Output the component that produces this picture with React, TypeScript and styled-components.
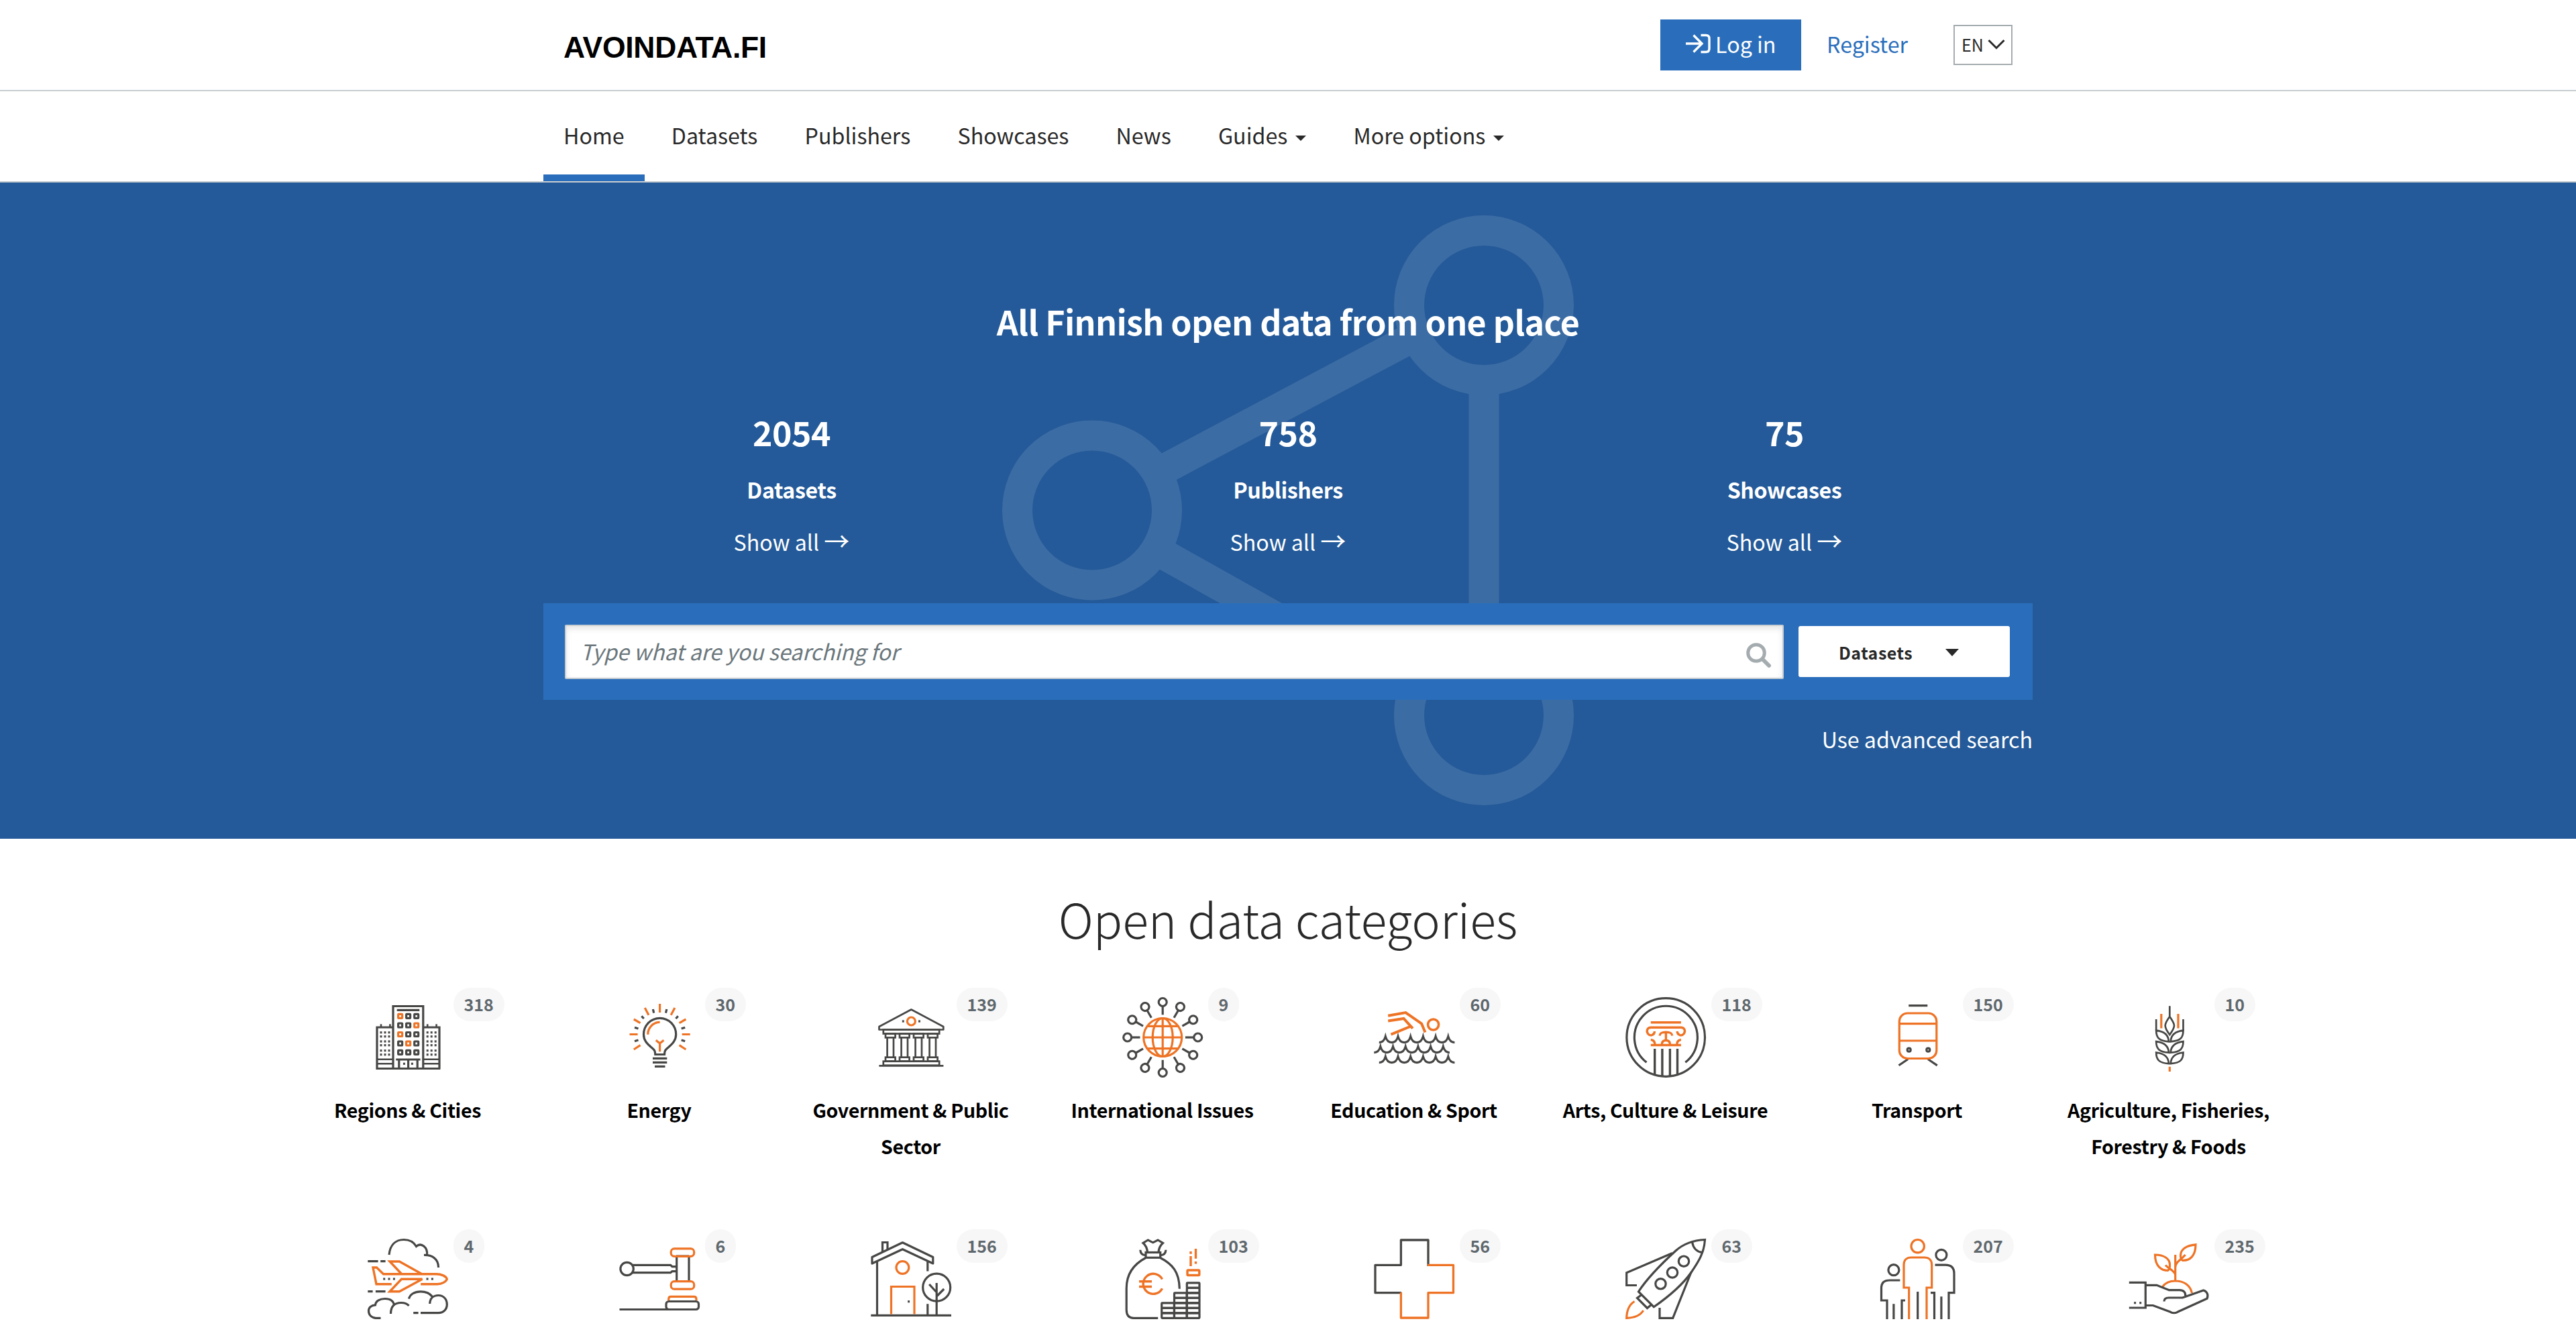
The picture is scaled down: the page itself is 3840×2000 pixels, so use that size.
import React from 'react';
import styled, { createGlobalStyle } from 'styled-components';

const DARK = '#474746';
const ORANGE = '#ee7325';
const BLUE = '#2a6ebb';
const NAVY = '#245a99';
const LINE = '#c8cdd0';

const GlobalStyle = createGlobalStyle`
  *, *::before, *::after { box-sizing: border-box; }
  body {
    margin: 0;
    background: #fff;
    color: #292929;
    font-family: "Noto Sans CJK JP", "Noto Sans CJK SC", "Noto Sans", sans-serif;
    font-size: 32.2px;
    line-height: 54px;
  }
`;

const Page = styled.div`
  width: 3840px;
  height: 2000px;
  overflow: hidden;
  background: #fff;
`;

const Container = styled.div`
  width: 2220px;
  margin: 0 auto;
`;

/* ---------- header ---------- */
const Header = styled.header`
  height: 136px;
  border-bottom: 2px solid ${LINE};
`;
const HeaderRow = styled(Container)`
  display: flex;
  align-items: center;
  height: 134px;
  padding: 0 30px;
`;
const Logo = styled.a`
  margin-right: auto;
  padding-top: 8px;
  font-family: "Liberation Sans", Arial, sans-serif;
  font-weight: 700;
  font-size: 44.5px;
  letter-spacing: -0.3px;
  color: #000;
`;
const LoginButton = styled.a`
  display: flex;
  align-items: center;
  gap: 6px;
  width: 210px;
  height: 76px;
  padding: 0 0 4px 38px;
  background: ${BLUE};
  color: #fff;
`;
const RegisterLink = styled.a`
  margin-left: 38px;
  padding-bottom: 4px;
  color: ${BLUE};
`;
const LanguageButton = styled.button`
  display: flex;
  align-items: center;
  gap: 6px;
  width: 88px;
  height: 60px;
  margin: 0 0 0 68px;
  padding: 0 0 2px 10px;
  border: 2px solid #a5acb0;
  background: #fff;
  color: #292929;
  font: inherit;
  font-size: 25px;
`;

/* ---------- navigation ---------- */
const NavBar = styled.nav`
  height: 136px;
  border-bottom: 2px solid ${LINE};
`;
const NavList = styled(Container)`
  display: flex;
  gap: 10.2px;
`;
const NavItem = styled.a<{ $active?: boolean }>`
  display: flex;
  align-items: center;
  height: 134px;
  padding: 0 30px 4px;
  box-shadow: ${p => (p.$active ? `inset 0 -10px 0 ${BLUE}` : 'none')};
`;
const NavCaret = styled.span`
  margin: 10px 0 0 12px;
  border: 8px solid transparent;
  border-top-color: #292929;
  border-bottom: 0;
`;

/* ---------- hero ---------- */
const Hero = styled.section`
  position: relative;
  height: 978px;
  padding-top: 166px;
  background: ${NAVY};
  color: #fff;
`;
const ShareMark = styled.svg`
  position: absolute;
  left: 1480px;
  top: 0;
`;
const HeroBody = styled(Container)`
  position: relative;
`;
const HeroTitle = styled.h1`
  margin: 0 0 92px;
  text-align: center;
  font-size: 50.1px;
  font-weight: 600;
  letter-spacing: -0.65px;
  line-height: 80px;
`;
const Stats = styled.div`
  display: grid;
  grid-template-columns: repeat(3, 1fr);
`;
const Stat = styled.div`
  display: flex;
  flex-direction: column;
  align-items: center;
`;
const StatNumber = styled.div`
  font-size: 50.1px;
  font-weight: 600;
  letter-spacing: -0.5px;
  line-height: 66px;
`;
const StatLabel = styled.div`
  margin-top: 26px;
  font-weight: 600;
  letter-spacing: -0.4px;
`;
const StatLink = styled.a`
  margin-top: 24px;
`;
const Arrow = styled.span`
  font-size: 38px;
  line-height: 1;
`;
const SearchBar = styled.form`
  display: flex;
  align-items: center;
  gap: 22px;
  height: 144px;
  margin: 65px 0 31px;
  padding: 0 34px 0 32px;
  background: ${BLUE};
`;
const SearchField = styled.div`
  display: flex;
  align-items: center;
  justify-content: space-between;
  flex: 1;
  height: 81px;
  padding: 0 16px 0 21px;
  border: 2px solid ${LINE};
  border-radius: 2px;
  background: #fff;
  box-shadow: inset 0 4px 8px rgba(41, 41, 41, 0.12);
`;
const Placeholder = styled.span`
  font-style: italic;
  color: #6b777c;
  padding-bottom: 2px;
`;
const SearchIcon = styled.svg`
  margin-top: 11px;
  fill: none;
  stroke: #a5acb0;
`;
const TypeButton = styled.button`
  display: flex;
  align-items: center;
  width: 315px;
  height: 76px;
  padding: 2px 0 0 60px;
  border: 0;
  border-radius: 3px;
  background: #fff;
  color: #292929;
  font: inherit;
  font-size: 25px;
  font-weight: 600;
  letter-spacing: 0.5px;
`;
const TypeCaret = styled.span`
  margin-left: 49px;
  border: 10px solid transparent;
  border-top: 11px solid #292929;
  border-bottom: 0;
`;
const AdvancedLink = styled.a`
  display: block;
  text-align: right;
`;

/* ---------- categories ---------- */
const Categories = styled.section`
  width: 3000px;
  margin: 0 auto;
  padding-top: 68px;
`;
const SectionTitle = styled.h2`
  margin: 0 0 68px;
  text-align: center;
  font-size: 71.8px;
  font-weight: 300;
  line-height: 100px;
`;
const CategoryGrid = styled.div`
  display: grid;
  grid-template-columns: repeat(8, 375px);
  grid-auto-rows: 360px;
`;
const CategoryCell = styled.a`
  display: flex;
  flex-direction: column;
  align-items: center;
`;
const IconBox = styled.div`
  position: relative;
  width: 120px;
  height: 120px;
`;
const Badge = styled.span`
  position: absolute;
  left: 128px;
  top: -14px;
  height: 50px;
  padding: 0 16px;
  border-radius: 25px;
  background: #f7f7f8;
  color: #5f686d;
  font-size: 25px;
  font-weight: 600;
  line-height: 49px;
`;
const CategoryName = styled.div`
  width: 325px;
  margin-top: 21px;
  text-align: center;
  color: #000;
  font-size: 28.6px;
  font-weight: 600;
  letter-spacing: -0.36px;
`;

/* ---------- icons ---------- */
const Glyph = styled.svg.attrs({ width: 120, height: 120, viewBox: '0 0 120 120' })`
  display: block;
  overflow: visible;
  fill: none;
  stroke: ${DARK};
  stroke-width: 3.2;
  .o { stroke: ${ORANGE}; }
  .f { fill: ${DARK}; stroke: none; }
`;

const Dot = ({ x, y }: { x: number; y: number }) => (
  <rect className="f" x={x - 1.5} y={y - 1.6} width={3} height={3.2} />
);

const City = () => (
  <Glyph>
    <path d="M38 106.5V13.5H82.8V106.5M14 106.5V45H38M82.8 45H107V106.5M12.4 106.5H108.4M43.7 19.3H77.3" />
    <path d="M20 40.3V45M33.4 40.3V45M89.2 40.3V45M102.6 40.3V45M14 92.7H38M14 99.3H38M83 92.7H107M83 99.3H107" strokeWidth={2.6} />
    <path d="M42.3 93H78.5M46.8 93V106M60.6 93V106M74.2 93V106" />
    {[28.3, 42, 55.5, 69, 82.3].map((y, r) =>
      [48.6, 60.6, 72.7].map((x, c) => (
        <rect key={`${r}${c}`} className={['00', '12', '20', '31'].includes(`${r}${c}`) ? 'o' : ''}
          x={x - 3} y={y - 3} width={6} height={6} rx={0.6} />
      )))}
    {[52.7, 58.7, 66, 71.7, 79.7, 85.7].map(y =>
      [20, 26, 32, 89.2, 95.2, 101.2].map(x => <Dot key={`${x}-${y}`} x={x} y={y} />))}
    <Dot x={54.4} y={99.3} /><Dot x={66.4} y={99.3} />
  </Glyph>
);

const Bulb = () => (
  <Glyph>
    <path d="M53.8 85.5C53.8 80 52.5 78.5 47.5 74.5C41 69 36.5 64 36.5 55.5A24 24 0 0 1 84.7 55.5C84.7 64 80 69 73.7 74.5C68.7 78.5 67.5 80 67.5 85.5Z" />
    <path d="M50 91.3H71.3M50 97.3H71.3M53 103.3H68.5" />
    <path className="o" d="M42.8 55.7A18 18 0 0 1 60.6 37.3M60.6 81.3V69L54.8 64.3M60.6 69L66.4 64.3" />
    <path className="o" d="M60.6 10V23M38.3 16L44 26.7M82.9 16L77.2 26.7M21.8 33L31.6 38.7M99.4 33L89.6 38.7M15.5 55.5H27.6M93.7 55.5H105.7M21.8 78L31.6 71.7M99.4 78L89.6 71.7" />
    <path d="M50.4 18L51.7 23.7M70.8 18L69.5 23.7M33.4 28.3L36.8 32M87.8 28.3L84.4 32M23 45.2L28.5 47M98.2 45.2L92.7 47M23 65.8L28.5 64M98.2 65.8L92.7 64" />
  </Glyph>
);

const Government = () => (
  <Glyph>
    <g strokeWidth={2.7}>
      <path d="M12.5 48.5V44L60.4 18.5L108.3 44V48.5Z" strokeLinejoin="round" />
      <rect x={18.8} y={48.5} width={83.4} height={6} />
      <rect x={18.8} y={95.7} width={83.4} height={6} />
      <path d="M12.4 102.3H108.4" />
      {[22, 43, 64, 85].map(x => (
        <g key={x}>
          <rect x={x} y={54.7} width={14.6} height={5.6} />
          <path d={`M${x + 2.6} 60.3V89.7M${x + 12} 60.3V89.7`} />
          <rect x={x} y={89.7} width={14.6} height={5.8} />
        </g>
      ))}
    </g>
    <circle className="o" cx={60.4} cy={36} r={6} />
    <Dot x={48.3} y={36} /><Dot x={72.5} y={36} />
  </Glyph>
);

const International = () => (
  <Glyph>
    <g className="o">
      <circle cx={60.2} cy={60} r={28.5} />
      <ellipse cx={60.2} cy={60} rx={15} ry={28.5} />
      <path d="M60.2 31.5V88.5M31.7 60H88.7M37 43.3H83.4M37 76.7H83.4" />
    </g>
    {Array.from({ length: 12 }, (_, i) => (
      <g key={i} transform={`rotate(${i * 30} 60.2 60)`}>
        <circle cx={60.2} cy={7.5} r={6} />
        <path d="M60.2 13.5V26.3" />
      </g>
    ))}
  </Glyph>
);

const scallop = 'q2.5 9 9.35 9q6.85 0 9.35 -9';
const wave = (x: number, y: number) =>
  `M${x} ${y + 8.8}q7 0 9.5 -9${scallop.repeat(5)}q2.5 9 9.6 9`;

const Swim = () => (
  <Glyph>
    <path d={`${wave(7.8, 58.8)}${wave(0.3, 73.8)}${wave(7.8, 88.8)}`} />
    <g className="o" strokeWidth={4}>
      <path d="M21.2 27.7L47.4 23L71.1 39.5L76.5 52.5M21.2 35.5L44.5 32L58 46.7M25.5 55.7L55 43.5" />
      <circle cx={88.6} cy={41} r={8} strokeWidth={3.6} />
    </g>
  </Glyph>
);

const Arts = () => (
  <Glyph>
    <circle cx={60.2} cy={60} r={58.3} />
    <path d="M31.5 97.3A47 47 0 1 1 89.3 97.3" />
    <path d="M43.7 77V116M54.9 77V118M66.4 77V118M77.5 77V116" strokeWidth={3.4} />
    <g className="o" strokeWidth={3.4}>
      <path d="M37.8 37.7H82.9M37.8 45.3H82.9M37.8 71.5H82.9" />
      <path d="M38 45.3C32 45.5 31 51 33.5 54.5C37 59 43.5 56.5 43.5 51M82.7 45.3C88.7 45.5 89.7 51 87.2 54.5C83.7 59 77.2 56.5 77.2 51" />
      <path d="M51 57.5C51.5 53.5 54 52.2 60.4 52.2C66.8 52.2 69.3 53.5 69.8 57.5M60.4 52V64.5M54.3 70.5C54.3 66 56.5 64.5 60.4 64.5C64.3 64.5 66.5 66 66.5 70.5M37.8 63.5C42 64 44 66.5 44 71M82.9 63.5C78.7 64 76.7 66.5 76.7 71" />
    </g>
  </Glyph>
);

const Tram = () => (
  <Glyph>
    <path d="M47.2 12.7H75.3M46.2 92.5L32.5 101.8M76 92.5L89.8 101.8" />
    <g className="o">
      <rect x={33.3} y={24} width={55.5} height={67.5} rx={12} />
      <path d="M33.3 39.7H88.8M33.3 65H88.8" />
    </g>
    <circle cx={47.7} cy={78.7} r={2.5} />
    <circle cx={76.3} cy={78.7} r={2.5} />
  </Glyph>
);

const Wheat = () => (
  <Glyph>
    <path d="M61.3 13.3V29C57 35 54.7 39 54.7 42.5C54.7 47 57.5 51 61.3 56C65 51 68 47 68 42.5C68 39 65.5 35 61.3 29" strokeWidth={2.7} />
    <path d="M41.2 33V50M81.5 33V50" strokeWidth={2.7} />
    {[0, 16.4, 32.8].map(dy => (
      <path key={dy} strokeWidth={2.7} transform={`translate(0 ${dy})`}
        d="M41.2 49.7C41.2 60 45 65.5 60 66.3C59.5 57 53 51 41.2 49.7ZM81.5 49.7C81.5 60 77.8 65.5 62.7 66.3C63.2 57 69.7 51 81.5 49.7Z" />
    ))}
    <path className="o" d="M48.8 25V46.5M74 25V46.5M61.3 103.7V111" />
  </Glyph>
);

const Plane = () => (
  <Glyph>
    <path d="M32 24C33.5 9 42 1.5 54 1.5C63 1.5 69 5.5 72.5 11.5C80 5 90 13 88.5 24.5M84 24.5C97 24 105.5 31 105.6 43" />
    <path d="M0.3 33.7H15.6M19.2 33.7H26.6M0.3 78.7H7.6M11.9 78.7H26.6" />
    <g className="o" strokeWidth={3.4}>
      <path d="M50.5 52.5L33 34H47.4L80.5 52.5M79.2 67.7H104C111 67.7 117 64 118.3 60.2C117 56 110 52.7 102.5 52.7H23.5L13.5 43H8L13 67.7H35.8" />
      <path d="M50.5 60.3H81.5L47.4 78.8H33Z" />
    </g>
    {[24.7, 32, 39.4, 89, 96.4].map(x => <Dot key={x} x={x} y={60} />)}
    <path d="M61.5 89.7C63 83 70 78.8 79 78.8C87 78.8 92.5 81 96.5 86.5M92.7 97C93 89 98 84.5 105.5 84.5C113 84.5 118.3 90 118.3 98C118.3 105.5 113 110.6 105.6 110.6H79M75.6 110.6H68.2" />
    <path d="M19.5 118.3H12C5 117.5 1.5 113 1.5 107.5C1.5 103 5 99.5 11.5 98.8C12 92.5 18.5 89.5 26 89.5C33.5 89.5 38.5 93 39.5 99M34.5 112C34.5 101 40 95.5 50 95.5C55 95.5 59 97 61.5 100" />
  </Glyph>
);

const Gavel = () => (
  <Glyph>
    <circle cx={11.6} cy={45} r={9.7} />
    <path d="M20 39.3H76.5L79 41.7H85M20 50.7H76.5L79 48.7H85M85.7 28V62.5M104 28V62.5M85 26H104" />
    <rect x={70} y={93.5} width={48.5} height={12} rx={4} />
    <path d="M0.5 105.5H112" />
    <g className="o">
      <rect x={77.2} y={14.8} width={34.5} height={11.5} rx={5} />
      <rect x={77.2} y={63.7} width={34.5} height={11.5} rx={5} />
      <path d="M73.7 92V90Q73.7 86.3 77 86.3H111.5Q115 86.3 115 90V92" />
    </g>
  </Glyph>
);

const House = () => (
  <Glyph>
    <path d="M2 27.5L47.4 5.8L92.8 27.5V37L47.4 15.7L2 37Z" strokeLinejoin="round" />
    <path d="M17.5 20V5.5H25V16M9.5 34V114M84.8 34V48.5M84.8 97.3V114M0.3 114.3H120" />
    <circle cx={98.2} cy={72.7} r={20.5} />
    <path d="M98.2 66V114M98.2 80L87.2 68M98.2 86L109.2 75" />
    <circle className="o" cx={47.4} cy={43} r={9.4} />
    <path className="o" d="M30.5 112.5V71.5H65V112.5" />
    <Dot x={56.6} y={93.7} />
  </Glyph>
);

const Money = () => (
  <Glyph>
    <path d="M53.2 118.3H17C10 118.3 6.2 114 6.2 106V74C6.2 52 17 38 35 28.5M56.6 28.5C75 38 85 50 85.3 74.7" />
    <rect x={35} y={20.5} width={21.7} height={7.8} />
    <path d="M37.5 20C37 14 35 10 31 6.5L38.3 2L45.7 5.8L53 2L60.5 6.5C56.5 10 54.5 14 54 20M26.8 16.7C27 21.5 30 24.5 35 24.7M64.9 16.7C64.7 21.5 61.7 24.5 56.7 24.7" />
    <path className="o" d="M59.5 60.5A15 15 0 1 0 59.5 74.2M25 63.7H44M25 71.5H44" strokeWidth={3.4} />
    {[[58.7, 3], [77.5, 5], [96.3, 7]].map(([x, n]) =>
      Array.from({ length: n }, (_, i) => (
        <rect key={`${x}-${i}`} x={x} y={110.9 - i * 7.5} width={18.7} height={7.5} rx={0.8} />
      )))}
    <g className="o">
      <rect x={97} y={47} width={17.8} height={7.5} rx={1} strokeWidth={3.4} />
      <path d="M102 19V22.7M102 26V41M109.5 15V29.7M109.5 34V37.5" strokeWidth={3.4} />
    </g>
  </Glyph>
);

const Cross = () => (
  <Glyph>
    <g strokeWidth={3.3} strokeLinejoin="round">
      <path d="M81 41V2H40.4V39.3H2V80.7H41" />
      <path className="o" d="M80 39.3H118.5V80.7H81V118H40.4V80" />
    </g>
  </Glyph>
);

const Rocket = () => (
  <Glyph>
    <path d="M118.5 1.5C100 2.5 86 8 75 18C52 39 33 58 19.5 79L42.3 101.7C62 88 84 70 97.7 50.7C110 33 117.5 20 118.5 1.5ZM99.8 6C101 14 106.5 19.5 114.6 20.7" />
    <circle cx={87} cy={33.7} r={7.7} />
    <circle cx={70} cy={50.5} r={7.7} />
    <circle cx={52.5} cy={67.3} r={7.7} />
    <path d="M70 21.5L1.7 50.7V69.5H17M98 50L70.7 118.3H51V103M23.5 84L17.5 88.5L32.5 103.5L38.5 98.5" />
    <path className="o" d="M13.5 93.5C6 98 2 106 1.7 118.3C14 118 22 114.5 26.7 107" />
  </Glyph>
);

const People = () => (
  <Glyph>
    <circle cx={24.9} cy={46.7} r={8} />
    <circle cx={95.9} cy={24.3} r={8} />
    <path d="M34.4 62H19C10 62 6.5 66 6.5 74V92H15V120M24.9 97.3V120M42 92H37V120" />
    <path d="M86.5 39.2H102C111 39.2 115 44 115 52V80.7H107V120M95.9 86.3V120M80 80.7H85.5V120M60.7 79V120" />
    <g className="o">
      <circle cx={60.7} cy={11.2} r={9.7} />
      <path d="M47.7 120V73H40V39C40 32 44 28 51 28H70.5C77.5 28 81.7 32 81.7 39V73H74V120" />
    </g>
  </Glyph>
);

const Plant = () => (
  <Glyph>
    <g className="o">
      <path d="M50.8 71.5C55 65.5 62 63 69.7 63C82 63 92 69 94.5 81M69.7 24V63M69.7 54C69 48 60 45 55 39.5M69.7 43C70 34 79 31 84.6 24" />
      <path d="M39.5 24C53 24 61 30 61.5 38C61.8 43 60 46.5 58.5 47.5C49 47.5 39.5 41 39.5 24ZM100 8.8C86 10 77.5 16 77.5 25C77.5 29 78.5 31.5 80.5 32.3C92 33 100 25 100 8.8Z" />
    </g>
    <path d="M0.8 65.3H25.3V103H0.8M25.3 69.3H42L60.5 76.7H76C82 76.7 85 80 84.7 85M53 93.5C53 89.5 55.5 88 60 88H80.5L111.7 77C117 78.5 119.5 84 117 89.3L73 109.3C69 111.5 66.5 111.5 62.5 109.3L36.5 99.5H25.3" />
    <Dot x={9.6} y={95.7} /><Dot x={17.7} y={95.7} />
  </Glyph>
);

const categories: { icon: React.FC; count: number; name?: string }[] = [
  { icon: City, count: 318, name: 'Regions & Cities' },
  { icon: Bulb, count: 30, name: 'Energy' },
  { icon: Government, count: 139, name: 'Government & Public Sector' },
  { icon: International, count: 9, name: 'International Issues' },
  { icon: Swim, count: 60, name: 'Education & Sport' },
  { icon: Arts, count: 118, name: 'Arts, Culture & Leisure' },
  { icon: Tram, count: 150, name: 'Transport' },
  { icon: Wheat, count: 10, name: 'Agriculture, Fisheries, Forestry & Foods' },
  { icon: Plane, count: 4 },
  { icon: Gavel, count: 6 },
  { icon: House, count: 156 },
  { icon: Money, count: 103 },
  { icon: Cross, count: 56 },
  { icon: Rocket, count: 63 },
  { icon: People, count: 207 },
  { icon: Plant, count: 235 },
];

const navItems = [
  { label: 'Home', active: true },
  { label: 'Datasets' },
  { label: 'Publishers' },
  { label: 'Showcases' },
  { label: 'News' },
  { label: 'Guides', menu: true },
  { label: 'More options', menu: true },
];

const stats = [
  { value: '2054', label: 'Datasets' },
  { value: '758', label: 'Publishers' },
  { value: '75', label: 'Showcases' },
];

export default function App() {
  return (
    <Page>
      <GlobalStyle />
      <Header>
        <HeaderRow>
          <Logo>AVOINDATA.FI</Logo>
          <LoginButton>
            <svg width="38" height="30" viewBox="0 0 38 30" fill="none" stroke="#fff" strokeWidth="3.4">
              <path d="M0 15H24M11.5 2.5L24 15L11.5 27.5" />
              <path d="M22.5 2.500H30Q35 2.5 35 7.5V22.5Q35 27.5 30 27.5H22.5" />
            </svg>
            Log in
          </LoginButton>
          <RegisterLink>Register</RegisterLink>
          <LanguageButton>
            EN
            <svg width="26" height="16" viewBox="0 0 26 16" fill="none" stroke="#292929" strokeWidth="3">
              <path d="M1.5 2L13 13.5L24.5 2" />
            </svg>
          </LanguageButton>
        </HeaderRow>
      </Header>
      <NavBar>
        <NavList>
          {navItems.map(item => (
            <NavItem key={item.label} $active={item.active}>
              {item.label}
              {item.menu && <NavCaret />}
            </NavItem>
          ))}
        </NavList>
      </NavBar>
      <Hero>
        <ShareMark width="880" height="978" viewBox="1480 272 880 978" fill="none" stroke="#fff" strokeWidth="45" opacity="0.11">
          <circle cx="2212" cy="455" r="111.5" />
          <circle cx="1628" cy="760.5" r="111.5" />
          <circle cx="2212" cy="1066" r="111.5" />
          <path d="M2212 575V932M1732 701L2108 501.5M1731 824L2086 1023" />
        </ShareMark>
        <HeroBody>
          <HeroTitle>All Finnish open data from one place</HeroTitle>
          <Stats>
            {stats.map(s => (
              <Stat key={s.label}>
                <StatNumber>{s.value}</StatNumber>
                <StatLabel>{s.label}</StatLabel>
                <StatLink>Show all <Arrow>→</Arrow></StatLink>
              </Stat>
            ))}
          </Stats>
          <SearchBar>
            <SearchField>
              <Placeholder>Type what are you searching for</Placeholder>
              <SearchIcon width="38" height="38" viewBox="0 0 38 38">
                <circle cx="15" cy="15" r="12.3" strokeWidth="5" />
                <path d="M25 25L34 34" strokeWidth="6" strokeLinecap="round" />
              </SearchIcon>
            </SearchField>
            <TypeButton type="button">
              Datasets
              <TypeCaret />
            </TypeButton>
          </SearchBar>
          <AdvancedLink>Use advanced search</AdvancedLink>
        </HeroBody>
      </Hero>
      <Categories>
        <SectionTitle>Open data categories</SectionTitle>
        <CategoryGrid>
          {categories.map(({ icon: Icon, count, name }) => (
            <CategoryCell key={count}>
              <IconBox>
                <Icon />
                <Badge>{count}</Badge>
              </IconBox>
              {name && <CategoryName>{name}</CategoryName>}
            </CategoryCell>
          ))}
        </CategoryGrid>
      </Categories>
    </Page>
  );
}
